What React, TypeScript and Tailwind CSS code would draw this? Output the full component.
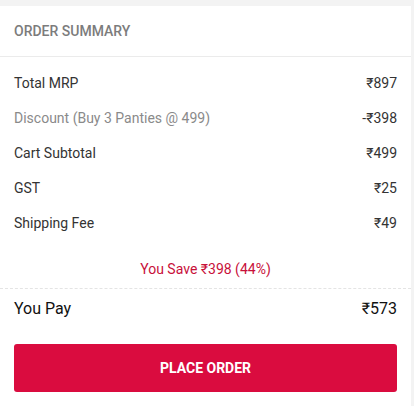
export default function App() {
  const rows = [
    { label: "Total MRP", value: "₹897", muted: false },
    { label: "Discount (Buy 3 Panties @ 499)", value: "-₹398", muted: true },
    { label: "Cart Subtotal", value: "₹499", muted: false },
    { label: "GST", value: "₹25", muted: false },
    { label: "Shipping Fee", value: "₹49", muted: false },
  ];

  return (
    <div className="h-[406px] w-[414px] bg-[#f3f3f3] pt-[6px] pr-[3px] font-['Roboto',sans-serif]">
      <div className="h-full bg-white">
        {/* Header */}
        <div className="flex h-[51px] items-center border-b border-[#ebebeb] px-[14px]">
          <span className="text-[14px] font-medium text-[#7c7c7c]">ORDER SUMMARY</span>
        </div>

        {/* Price rows */}
        <div className="px-[14px] pt-[9px]">
          {rows.map((r) => (
            <div key={r.label} className="flex h-[35px] items-center justify-between text-[14px]">
              <span className={r.muted ? "text-[#8a8a8a]" : "text-[#333333]"}>{r.label}</span>
              <span className="text-[#333333]">{r.value}</span>
            </div>
          ))}
        </div>

        <div className="flex h-[47px] items-center justify-center pt-[9px] text-[14px] text-[#c8103a]">
          You Save ₹398 (44%)
        </div>

        {/* Total */}
        <div className="border-t border-dashed border-[#e4e4e4] px-[14px]">
          <div className="flex h-[40px] items-center justify-between text-[16px] text-[#111111]">
            <span>You Pay</span>
            <span>₹573</span>
          </div>
          <button className="mt-[15px] flex h-[48px] w-full items-center justify-center rounded-[3px] bg-[#da0c3f] text-[14px] font-bold text-white">
            PLACE ORDER
          </button>
        </div>
      </div>
    </div>
  );
}
